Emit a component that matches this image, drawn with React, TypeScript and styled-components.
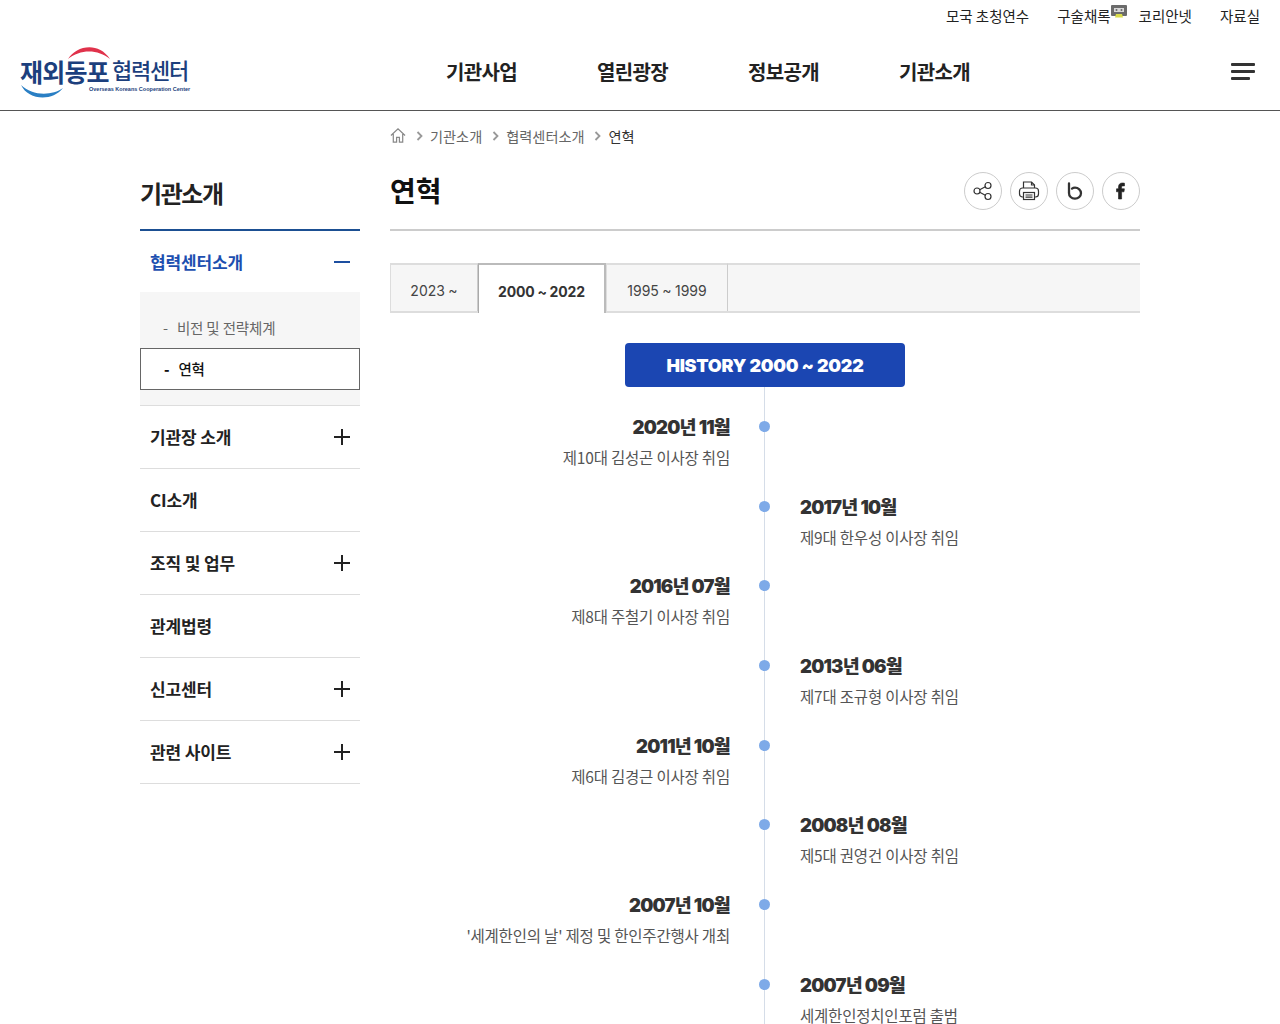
import styled, { createGlobalStyle } from 'styled-components'

const GlobalStyle = createGlobalStyle`
  html, body { margin: 0; padding: 0; background: #fff; }
  body { font-family: "Noto Sans CJK KR", "Noto Sans", sans-serif; color: #222; overflow: hidden; height: 1024px; }
  * { box-sizing: border-box; }
`

// ─── header ───
const Header = styled.header`
  height: 111px;
  border-bottom: 1px solid #555;
`
const TopLinks = styled.div`
  display: flex;
  justify-content: flex-end;
  gap: 28px;
  height: 33px;
  padding: 6px 20px 0 0;
  font-size: 14.5px;
  line-height: 20px;
  color: #222;
`
const TopLink = styled.a`
  display: flex;
  align-items: flex-start;
  position: relative;
`
const TapeIcon = styled.svg`
  position: absolute;
  left: 54px;
  top: -1px;
`
const MainBar = styled.div`
  display: flex;
  align-items: center;
  height: 77px;
  padding: 0 25px 0 20px;
`
const LogoWrap = styled.div`
  position: relative;
  width: 172px;
  height: 56px;
  flex: none;
`
const LogoArcs = styled.svg`
  position: absolute;
  left: 0;
  top: 0;
`
const LogoBig = styled.span`
  position: absolute;
  left: 0;
  top: 12px;
  font-size: 25px;
  line-height: 30px;
  font-weight: 700;
  color: #1c3f7d;
  letter-spacing: -0.8px;
  white-space: nowrap;
`
const LogoSmall = styled.span`
  position: absolute;
  left: 92px;
  top: 12px;
  font-size: 22px;
  line-height: 26px;
  font-weight: 500;
  color: #1c3f7d;
  letter-spacing: -1.2px;
  white-space: nowrap;
`
const LogoEn = styled.span`
  position: absolute;
  left: 69px;
  top: 41px;
  font-family: "Liberation Sans", sans-serif;
  font-size: 5.5px;
  line-height: 8px;
  font-weight: 700;
  color: #1c3f7d;
  white-space: nowrap;
`
const Nav = styled.nav`
  display: flex;
  gap: 80px;
  margin-left: 254px;
  flex: 1;
  font-size: 20px;
  font-weight: 700;
  letter-spacing: -0.65px;
  color: #222;
`
const Burger = styled.div`
  display: flex;
  flex-direction: column;
  align-items: flex-start;
  gap: 4px;
  width: 24px;
  span { display: block; height: 3px; background: #333; border-radius: 1px; width: 24px; }
  span:last-child { width: 19px; }
`

// ─── page ───
const Body = styled.div`
  display: flex;
  align-items: flex-start;
  gap: 30px;
  width: 1000px;
  margin-left: 140px;
`
const Side = styled.aside`
  width: 220px;
  flex: none;
  padding-top: 63px;
`
const SideTitle = styled.h2`
  margin: 0;
  height: 55px;
  font-size: 24px;
  line-height: 38px;
  font-weight: 700;
  letter-spacing: -1.4px;
  color: #222;
  border-bottom: 2px solid #1b4f92;
  box-sizing: content-box;
`
const SideRow = styled.div<{ $open?: boolean }>`
  display: flex;
  align-items: center;
  justify-content: space-between;
  height: ${p => (p.$open ? '61px' : '63px')};
  padding: 0 10px;
  font-size: 17px;
  font-weight: 700;
  letter-spacing: -0.15px;
  color: ${p => (p.$open ? '#1d4fb0' : '#222')};
  border-bottom: ${p => (p.$open ? 'none' : '1px solid #ddd')};
`
const RowLabel = styled.span<{ $open?: boolean }>`
  margin-bottom: ${p => (p.$open ? '0' : '2px')};
`
const Toggle = styled.span<{ $minus?: boolean }>`
  position: relative;
  width: 16px;
  height: 16px;
  &::before {
    content: '';
    position: absolute;
    left: 0;
    right: 0;
    top: 7px;
    height: 2px;
    background: ${p => (p.$minus ? '#1d4fa0' : '#222')};
  }
  &::after {
    content: '';
    display: ${p => (p.$minus ? 'none' : 'block')};
    position: absolute;
    top: 0;
    bottom: 0;
    left: 7px;
    width: 2px;
    background: #222;
  }
`
const SubMenu = styled.div`
  height: 114px;
  padding-top: 16px;
  background: #f6f6f6;
  border-bottom: 1px solid #ddd;
`
const SubItem = styled.div<{ $active?: boolean }>`
  display: flex;
  align-items: center;
  height: ${p => (p.$active ? '42px' : '40px')};
  padding: 0 0 2px 23px;
  gap: 9px;
  font-size: 14.5px;
  letter-spacing: -0.15px;
  font-weight: ${p => (p.$active ? 500 : 400)};
  color: ${p => (p.$active ? '#111' : '#666')};
  background: ${p => (p.$active ? '#fff' : 'transparent')};
  border: ${p => (p.$active ? '1px solid #666' : 'none')};
`
const Dash = styled.span<{ $active?: boolean }>`
  font-weight: ${p => (p.$active ? 900 : 400)};
`
const Main = styled.main`
  width: 750px;
  flex: none;
`
const Crumbs = styled.div`
  display: flex;
  align-items: center;
  height: 50px;
  gap: 8px;
  font-size: 14.2px;
  color: #666;
  padding-bottom: 1px;
`
const CrumbNow = styled.span`
  color: #333;
`
const ChevronIcon = styled.svg`
  position: relative;
  left: 1.5px;
`
const TitleRow = styled.div`
  display: flex;
  align-items: flex-start;
  justify-content: space-between;
  height: 68px;
  border-bottom: 2px solid #ccc;
  box-sizing: content-box;
`
const Title = styled.h1`
  margin: 0;
  font-size: 28px;
  line-height: 58px;
  font-weight: 700;
  color: #111;
`
const Tools = styled.div`
  display: flex;
  gap: 8px;
  padding-top: 11px;
`
const ToolBtn = styled.div`
  display: flex;
  align-items: center;
  justify-content: center;
  width: 38px;
  height: 38px;
  border: 1px solid #ccc;
  border-radius: 50%;
  background: #fff;
`
const Tabs = styled.div`
  display: flex;
  height: 50px;
  margin-top: 32px;
  background: #f6f6f6;
  border-top: 2px solid #ddd;
  border-bottom: 2px solid #ddd;
`
const Tab = styled.div<{ $active?: boolean; $w: number }>`
  display: flex;
  align-items: center;
  justify-content: center;
  width: ${p => p.$w}px;
  margin-top: -2px;
  margin-bottom: ${p => (p.$active ? '-2px' : '0')};
  padding-top: 4px;
  font-size: 14px;
  font-family: "Inter", "Noto Sans CJK KR", sans-serif;
  font-weight: ${p => (p.$active ? 700 : 400)};
  word-spacing: -0.5px;
  letter-spacing: ${p => (p.$active ? '-0.1px' : '0')};
  color: ${p => (p.$active ? '#333' : '#444')};
  background: ${p => (p.$active ? '#fff' : 'transparent')};
  border-top: 2px solid ${p => (p.$active ? '#bbb' : '#ddd')};
  border-left: ${p => (p.$active ? '1px solid #aaa' : '1px solid #ddd')};
  border-right: ${p => (p.$active ? '2px solid #bbb' : '1px solid #ccc')};
`
const HistoryBadge = styled.div`
  display: flex;
  align-items: center;
  justify-content: center;
  position: relative;
  z-index: 1;
  width: 280px;
  height: 44px;
  margin: 30px auto 0;
  border-radius: 4px;
  background: #1b46b2;
  color: #fff;
  font-family: "Inter", sans-serif;
  font-size: 18px;
  font-weight: 900;
  letter-spacing: -0.3px;
`
const Timeline = styled.div`
  position: relative;
  padding-top: 28px;
  &::before {
    content: '';
    position: absolute;
    left: 374px;
    top: 0;
    bottom: 0;
    width: 1px;
    background: #d5dde8;
  }
`
const Item = styled.div<{ $right?: boolean }>`
  position: relative;
  height: 79.7px;
  width: 340px;
  margin-left: ${p => (p.$right ? '410px' : '0')};
  text-align: ${p => (p.$right ? 'left' : 'right')};
  &::after {
    content: '';
    position: absolute;
    top: 6px;
    ${p => (p.$right ? 'left: -41px;' : 'right: -40px;')}
    width: 11px;
    height: 11px;
    border-radius: 50%;
    background: #7eaae8;
  }
`
const ItemDate = styled.div`
  font-family: "Inter", "Noto Sans CJK KR", sans-serif;
  font-size: 18.5px;
  line-height: 24px;
  font-weight: 900;
  letter-spacing: -0.8px;
  color: #333;
`
const ItemText = styled.div`
  margin-top: 8px;
  font-size: 15.5px;
  line-height: 20px;
  letter-spacing: -0.2px;
  color: #555;
`

const Chevron = () => (
  <ChevronIcon width="8" height="10" viewBox="0 0 8 10" fill="none" stroke="#999" strokeWidth="1.8">
    <path d="M1.5 1l4 4-4 4" />
  </ChevronIcon>
)

const items = [
  ['2020년 11월', '제10대 김성곤 이사장 취임'],
  ['2017년 10월', '제9대 한우성 이사장 취임'],
  ['2016년 07월', '제8대 주철기 이사장 취임'],
  ['2013년 06월', '제7대 조규형 이사장 취임'],
  ['2011년 10월', '제6대 김경근 이사장 취임'],
  ['2008년 08월', '제5대 권영건 이사장 취임'],
  ['2007년 10월', "'세계한인의 날' 제정 및 한인주간행사 개최"],
  ['2007년 09월', '세계한인정치인포럼 출범'],
]

const sideRows: [string, boolean][] = [
  ['기관장 소개', true],
  ['CI소개', false],
  ['조직 및 업무', true],
  ['관계법령', false],
  ['신고센터', true],
  ['관련 사이트', true],
]

export default function App() {
  return (
    <>
      <GlobalStyle />
      <Header>
        <TopLinks>
          <TopLink>모국 초청연수</TopLink>
          <TopLink>
            구술채록
            <TapeIcon width="16" height="13" viewBox="0 0 16 13">
              <rect x="0" y="0" width="16" height="11" rx="1" fill="#6b6b6b" />
              <rect x="3" y="3" width="10" height="4" fill="#d8d8d8" />
              <circle cx="5.5" cy="5" r="1" fill="#666" />
              <circle cx="10.5" cy="5" r="1" fill="#666" />
              <path d="M4 12.5l1-3.5h6l1 3.5z" fill="#d9dc4a" />
            </TapeIcon>
          </TopLink>
          <TopLink>코리안넷</TopLink>
          <TopLink>자료실</TopLink>
        </TopLinks>
        <MainBar>
          <LogoWrap>
            <LogoArcs width="172" height="56" viewBox="0 0 172 56">
              <path d="M48 15C56 2 78-3 90 15C78 5 60 5 48 15z" fill="#e0324b" />
              <path d="M1 41C8 56 32 58 43 44C32 52 12 52 1 41z" fill="#2a7fc4" />
            </LogoArcs>
            <LogoBig>재외동포</LogoBig>
            <LogoSmall>협력센터</LogoSmall>
            <LogoEn>Overseas Koreans Cooperation Center</LogoEn>
          </LogoWrap>
          <Nav>
            <span>기관사업</span>
            <span>열린광장</span>
            <span>정보공개</span>
            <span>기관소개</span>
          </Nav>
          <Burger>
            <span />
            <span />
            <span />
          </Burger>
        </MainBar>
      </Header>
      <Body>
        <Side>
          <SideTitle>기관소개</SideTitle>
          <SideRow $open>
            <RowLabel $open>협력센터소개</RowLabel>
            <Toggle $minus />
          </SideRow>
          <SubMenu>
            <SubItem>
              <Dash>-</Dash>비전 및 전략체계
            </SubItem>
            <SubItem $active>
              <Dash $active>-</Dash>연혁
            </SubItem>
          </SubMenu>
          {sideRows.map(([label, more]) => (
            <SideRow key={label}>
              <RowLabel>{label}</RowLabel>
              {more && <Toggle />}
            </SideRow>
          ))}
        </Side>
        <Main>
          <Crumbs>
            <svg width="16" height="17" viewBox="0 0 17 17" fill="none" stroke="#888" strokeWidth="1.3">
              <path d="M1 8.5L8.5 1.5 16 8.5M3.5 7v8.5h3.5v-5h3v5h3.5V7" />
            </svg>
            <Chevron />
            <span>기관소개</span>
            <Chevron />
            <span>협력센터소개</span>
            <Chevron />
            <CrumbNow>연혁</CrumbNow>
          </Crumbs>
          <TitleRow>
            <Title>연혁</Title>
            <Tools>
              <ToolBtn>
                <svg width="22" height="22" viewBox="0 0 22 22" fill="none" stroke="#333" strokeWidth="1.2">
                  <circle cx="5" cy="11" r="3" />
                  <circle cx="16" cy="5.5" r="3" />
                  <circle cx="16" cy="16.5" r="3" />
                  <path d="M7.7 9.7l5.6-2.9M7.7 12.3l5.6 2.9" />
                </svg>
              </ToolBtn>
              <ToolBtn>
                <svg width="22" height="22" viewBox="0 0 22 22" fill="none" stroke="#333" strokeWidth="1.2">
                  <path d="M5.5 8V2h8l3 3v3" />
                  <path d="M13.5 2v3h3" />
                  <rect x="1.5" y="8" width="19" height="9" rx="3" />
                  <rect x="5.5" y="12.5" width="11" height="7" fill="#fff" />
                  <path d="M7.5 15h7M7.5 17.2h7" />
                </svg>
              </ToolBtn>
              <ToolBtn>
                <svg width="20" height="20" viewBox="0 0 20 20" fill="none" stroke="#333" strokeWidth="2.3" strokeLinecap="round">
                  <path d="M4 2.5v9.5a6 5.5 0 1 0 6-5.3c-1.2 0-2.2.3-3 .9" />
                </svg>
              </ToolBtn>
              <ToolBtn>
                <svg width="20" height="20" viewBox="0 0 20 20" fill="#222" stroke="#222" strokeWidth="0.6">
                  <path d="M7.5 18V10.8H5.5V7.8H7.5V6c0-2.6 1.5-4 3.8-4 1 0 1.9.1 2.2.2v2.7h-1.5c-1.1 0-1.4.5-1.4 1.4v1.5h2.8l-.4 3h-2.4V18z" />
                </svg>
              </ToolBtn>
            </Tools>
          </TitleRow>
          <Tabs>
            <Tab $w={88}>2023 ~</Tab>
            <Tab $w={128} $active>
              2000 ~ 2022
            </Tab>
            <Tab $w={122}>1995 ~ 1999</Tab>
          </Tabs>
          <HistoryBadge>HISTORY 2000 ~ 2022</HistoryBadge>
          <Timeline>
            {items.map(([date, text], i) => (
              <Item key={date} $right={i % 2 === 1}>
                <ItemDate>{date}</ItemDate>
                <ItemText>{text}</ItemText>
              </Item>
            ))}
          </Timeline>
        </Main>
      </Body>
    </>
  )
}
